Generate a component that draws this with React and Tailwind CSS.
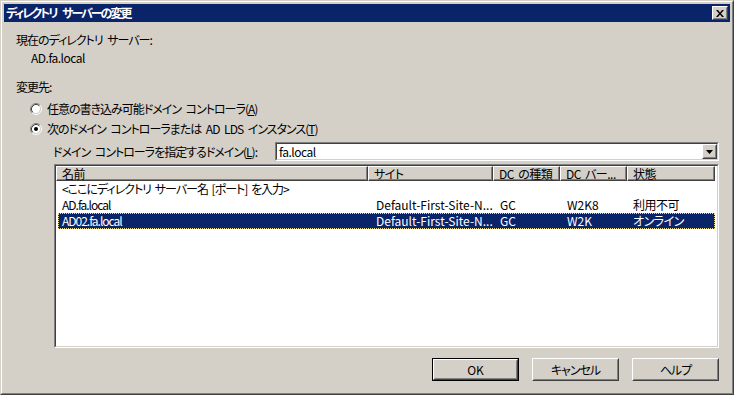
import React from "react";

const FONT = "font-['Noto_Sans_CJK_JP','Noto_Sans',sans-serif] [font-feature-settings:'palt']";
const JP = "tracking-[-1px] [word-spacing:3px]";

function Radio({ checked }) {
  return (
    <svg width="12" height="12" viewBox="0 0 12 12" className="shrink-0">
      <circle cx="6" cy="6" r="4.2" fill="#ffffff" />
      <path d="M2.11 9.89 A5.5 5.5 0 0 1 9.89 2.11" fill="none" stroke="#808080" strokeWidth="1" />
      <path d="M9.89 2.11 A5.5 5.5 0 0 1 2.11 9.89" fill="none" stroke="#ffffff" strokeWidth="1" />
      <path d="M2.82 9.18 A4.5 4.5 0 0 1 9.18 2.82" fill="none" stroke="#404040" strokeWidth="1" />
      <path d="M9.18 2.82 A4.5 4.5 0 0 1 2.82 9.18" fill="none" stroke="#d4d0c8" strokeWidth="1" />
      {checked && <circle cx="6" cy="6" r="2" fill="#000000" />}
    </svg>
  );
}

function Raised({ className = "", children }) {
  return (
    <div className={"border border-t-white border-l-white border-b-[#404040] border-r-[#404040] bg-[#d4d0c8] " + className}>
      <div className="w-full h-full border border-t-[#d4d0c8] border-l-[#d4d0c8] border-b-[#808080] border-r-[#808080] flex items-center justify-center">
        {children}
      </div>
    </div>
  );
}

function Sunken({ className = "", children }) {
  return (
    <div className={"border border-t-[#808080] border-l-[#808080] border-b-white border-r-white " + className}>
      <div className="w-full h-full border border-t-[#404040] border-l-[#404040] border-b-[#d4d0c8] border-r-[#d4d0c8] bg-white overflow-hidden">
        {children}
      </div>
    </div>
  );
}

function HeaderCell({ w, children }) {
  return (
    <div
      className={"h-full shrink-0 border border-t-white border-l-white border-b-[#404040] border-r-[#404040] bg-[#d4d0c8] " + w}
    >
      <div className="h-full border-b border-r border-b-[#808080] border-r-[#808080] pl-[5px] text-[12px] leading-[13px] flex items-center whitespace-nowrap tracking-[-0.5px] [word-spacing:2px]">
        {children}
      </div>
    </div>
  );
}

const cols = ["w-[312px]", "w-[125px]", "w-[67px]", "w-[67px]", "w-[88px]"];

function Row({ cells, selected }) {
  return (
    <div
      className={
        "ml-[2px] w-[657px] h-[16px] flex items-center text-[12px] leading-[16px] whitespace-nowrap " +
        (selected ? "bg-[#0a246a] text-white outline outline-1 outline-dotted outline-[#e8d890] -outline-offset-1" : "text-black")
      }
    >
      <div className="w-[310px] shrink-0 pl-[4px] tracking-[-1px] [word-spacing:2px]">{cells[0]}</div>
      <div className="w-[125px] shrink-0 pl-[8px]">{cells[1]}</div>
      <div className="w-[67px] shrink-0 pl-[7px]">{cells[2]}</div>
      <div className="w-[67px] shrink-0 pl-[7px]">{cells[3]}</div>
      <div className="w-[88px] shrink-0 pl-[6px] tracking-[-0.5px]">{cells[4]}</div>
    </div>
  );
}

export default function App() {
  return (
    <div className={"w-[734px] h-[395px] bg-[#d4d0c8] text-black " + FONT}>
      <div className="w-full h-full border border-t-[#d4d0c8] border-l-[#d4d0c8] border-b-[#404040] border-r-[#404040]">
        <div className="w-full h-full border border-t-white border-l-white border-b-[#808080] border-r-[#808080] p-[2px] flex flex-col">
          {/* Title bar */}
          <div className="h-[18px] shrink-0 bg-[#0a246a] flex items-center justify-between pl-[2px] pr-[2px]">
            <span className="text-white font-bold text-[12px] leading-[14px] whitespace-nowrap tracking-[-2px] [word-spacing:5px]">
              ディレクトリ サーバーの変更
            </span>
            <Raised className="w-[16px] h-[14px]">
              <svg width="8" height="7" viewBox="0 0 8 7">
                <path d="M0 0h2l2 2.5L6 0h2L5 3.5 8 7H6L4 4.5 2 7H0l3-3.5z" fill="#000" />
              </svg>
            </Raised>
          </div>

          {/* Content */}
          <div className="flex-1 flex flex-col pl-[12px] pr-[11px] text-[12px]">
            <div className={"mt-[10px] h-[16px] leading-[16px] whitespace-nowrap " + JP}>現在のディレクトリ サーバー:</div>
            <div className="mt-[2px] h-[16px] leading-[16px] pl-[15px] tracking-[-0.5px]">AD.fa.local</div>
            <div className={"mt-[13px] h-[16px] leading-[16px] " + JP}>変更先:</div>
            <div className="mt-[6px] h-[16px] flex items-center pl-[14px] gap-[5px] whitespace-nowrap">
              <Radio />
              <span className={"leading-[16px] " + JP}>
                任意の書き込み可能ドメイン コントローラ(<span className="underline">A</span>)
              </span>
            </div>
            <div className="mt-[4px] h-[16px] flex items-center pl-[14px] gap-[5px] whitespace-nowrap">
              <Radio checked />
              <span className={"leading-[16px] " + JP}>
                次のドメイン コントローラまたは AD LDS インスタンス(<span className="underline">T</span>)
              </span>
            </div>
            <div className="mt-[5px] h-[19px] flex items-center">
              <span className={"pl-[37px] leading-[16px] whitespace-nowrap " + JP}>
                ドメイン コントローラを指定するドメイン(<span className="underline">L</span>):
              </span>
              <Sunken className="ml-auto w-[444px] h-[19px]">
                <div className="flex h-full items-center">
                  <span className="flex-1 pl-[2px] leading-[14px] tracking-[-0.5px]">fa.local</span>
                  <Raised className="w-[15px] h-full">
                    <svg width="7" height="4" viewBox="0 0 7 4">
                      <path d="M0 0h7L3.5 4z" fill="#000" />
                    </svg>
                  </Raised>
                </div>
              </Sunken>
            </div>

            {/* List view */}
            <Sunken className="mt-[3px] ml-[38px] h-[184px]">
              <div className="h-[15px] flex">
                <HeaderCell w={cols[0]}>名前</HeaderCell>
                <HeaderCell w={cols[1]}>サイト</HeaderCell>
                <HeaderCell w={cols[2]}>DC の種類</HeaderCell>
                <HeaderCell w={cols[3]}>DC バー...</HeaderCell>
                <HeaderCell w={cols[4]}>状態</HeaderCell>
              </div>
              <Row cells={["<ここにディレクトリ サーバー名 [ポート] を入力>", "", "", "", ""]} />
              <Row cells={["AD.fa.local", "Default-First-Site-N...", "GC", "W2K8", "利用不可"]} />
              <Row selected cells={["AD02.fa.local", "Default-First-Site-N...", "GC", "W2K", "オンライン"]} />
            </Sunken>

            {/* Buttons */}
            <div className="mt-[10px] flex justify-end gap-[13px]">
              <div className="w-[87px] h-[23px] border border-black">
                <Raised className="w-full h-full">
                  <span className="leading-[14px]">OK</span>
                </Raised>
              </div>
              <Raised className="w-[87px] h-[23px]">
                <span className="leading-[14px] tracking-[-1px]">キャンセル</span>
              </Raised>
              <Raised className="w-[87px] h-[23px]">
                <span className="leading-[14px] tracking-[-1px]">ヘルプ</span>
              </Raised>
            </div>
          </div>
        </div>
      </div>
    </div>
  );
}
